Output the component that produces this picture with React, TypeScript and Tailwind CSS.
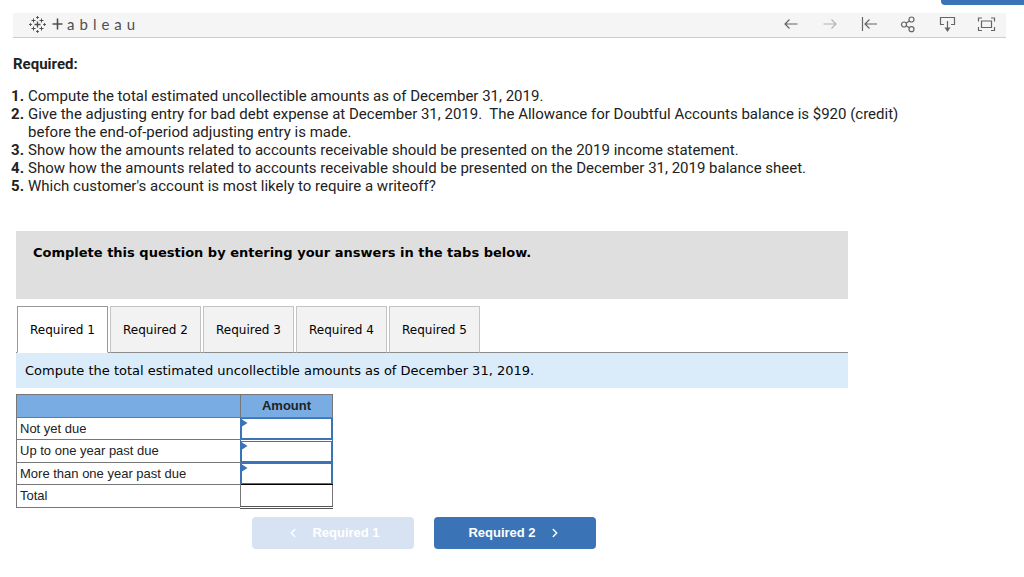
import { useState, type ReactNode } from "react";
import clsx from "clsx";
import { ChevronLeft, ChevronRight } from "lucide-react";

const tasks = [
  "Compute the total estimated uncollectible amounts as of December 31, 2019.",
  "Give the adjusting entry for bad debt expense at December 31, 2019.\u00a0 The Allowance for Doubtful Accounts balance is $920 (credit) before the end-of-period adjusting entry is made.",
  "Show how the amounts related to accounts receivable should be presented on the 2019 income statement.",
  "Show how the amounts related to accounts receivable should be presented on the December 31, 2019 balance sheet.",
  "Which customer's account is most likely to require a writeoff?",
];

const tabs = ["Required 1", "Required 2", "Required 3", "Required 4", "Required 5"];

const agingRows = ["Not yet due", "Up to one year past due", "More than one year past due"];

function TableauLogo() {
  return (
    <a href="#tableau" aria-label="tableau" className="flex items-center text-[#4f4f4f]">
      <svg width="17" height="17" viewBox="0 0 17 17" fill="none" stroke="currentColor">
        <path d="M8.5 5.5v6M5.5 8.5h6" strokeWidth="1.3" />
        <path
          d="M4.5 2.5v4M2.5 4.5h4M12.5 2.5v4M10.5 4.5h4M4.5 10.5v4M2.5 12.5h4M12.5 10.5v4M10.5 12.5h4"
          strokeWidth="1"
        />
        <path
          d="M8.5 0v3M7 1.5h3M8.5 14v3M7 15.5h3M1.5 7v3M0 8.5h3M15.5 7v3M14 8.5h3"
          strokeWidth="0.9"
        />
      </svg>
      <svg className="ml-1.5" width="11" height="12" viewBox="0 0 11 12" fill="none" stroke="currentColor">
        <path d="M5.5 0.5v11M0.5 6h10" strokeWidth="1.6" />
      </svg>
      <span className="ml-1 flex gap-[5px] font-[Lato,sans-serif] text-[15px] leading-5" aria-hidden="true">
        {["a", "b", "l", "e", "a", "u"].map((letter, i) => (
          <span key={i}>{letter}</span>
        ))}
      </span>
    </a>
  );
}

function ToolButton({ label, faded, children }: { label: string; faded?: boolean; children: ReactNode }) {
  return (
    <button type="button" aria-label={label} disabled={faded} className={faded ? "text-[#b4b4b4]" : "text-[#666666]"}>
      <svg width="20" height="18" viewBox="0 0 20 18" fill="none" stroke="currentColor" strokeWidth="1.2">
        {children}
      </svg>
    </button>
  );
}

function Toolbar() {
  return (
    <div className="mt-2 mr-[18px] ml-[13px] flex h-[25px] items-center justify-between border-b border-[#cccccc] bg-[#f5f5f5] pr-[10px] pb-[2px] pl-4">
      <TableauLogo />
      <div className="flex items-center gap-[19px]">
        <ToolButton label="Undo">
          <path d="M16.5 9H4M8.5 4.5L4 9l4.5 4.5" />
        </ToolButton>
        <ToolButton label="Redo" faded>
          <path d="M3.5 9H16M11.5 4.5L16 9l-4.5 4.5" />
        </ToolButton>
        <ToolButton label="Revert">
          <path d="M3.5 2v14M18 9H6M10.5 4.5L6 9l4.5 4.5" />
        </ToolButton>
        <ToolButton label="Share">
          <circle cx="6" cy="9.5" r="2.5" />
          <circle cx="13.5" cy="4.5" r="2.5" />
          <circle cx="13.5" cy="14.2" r="2.5" />
          <path d="M8 8.2l3.4-2.2M8 10.8l3.4 2" />
        </ToolButton>
        <ToolButton label="Download">
          <path d="M7 9.5H3.5v-7h14v7H14M10.5 6v9" />
          <path d="M7.5 12.5h6L10.5 17z" fill="currentColor" stroke="none" />
        </ToolButton>
        <ToolButton label="Full screen">
          <path d="M5.5 6h10v6.5h-10zM2.5 6.5V3H6M15 3h3.5v3.5M18.5 12v3.5H15M6 15.5H2.5V12" />
        </ToolButton>
      </div>
    </div>
  );
}

function AmountTable() {
  return (
    <table className="mt-[6px] ml-4 w-[317px] table-fixed border-collapse font-[Liberation_Sans,Arial,sans-serif] text-[13px] leading-4 text-[#222222]">
      <colgroup>
        <col className="w-[224px]" />
        <col />
      </colgroup>
      <thead>
        <tr className="h-[23px] bg-[#7aace4]">
          <td className="border border-[#777777] p-0" />
          <th scope="col" className="border border-[#777777] p-0 font-bold">
            Amount
          </th>
        </tr>
      </thead>
      <tbody>
        {agingRows.map((row, i) => (
          <tr key={row} className="h-[22px] even:h-[23px]">
            <th scope="row" className="border border-[#777777] border-r-[#3b74b6] px-[3px] py-0 text-left font-normal">
              <label htmlFor={`amount-${i}`}>{row}</label>
            </th>
            <td
              className={clsx(
                "border border-[#3b74b6] p-0",
                i === agingRows.length - 1 && "border-b-black"
              )}
            >
              <div className="relative">
                <input
                  id={`amount-${i}`}
                  type="text"
                  className="block h-[21px] w-full border border-[#3b74b6] px-1 text-right outline-none"
                />
                <svg className="absolute top-px left-px text-[#3b74b6]" width="6" height="8" viewBox="0 0 6 8">
                  <path d="M0 0.5l5.5 3.5L0 7.5z" fill="currentColor" />
                </svg>
              </div>
            </td>
          </tr>
        ))}
        <tr className="h-[23px]">
          <th scope="row" className="border border-[#777777] px-[3px] py-0 text-left font-normal">
            Total
          </th>
          <td className="border border-t-black border-r-[#777777] border-b-[3px] border-b-[#555555] border-l-[#777777] p-0 [border-bottom-style:double]" />
        </tr>
      </tbody>
    </table>
  );
}

export default function App() {
  const [active, setActive] = useState(0);

  return (
    <div className="bg-white pb-7 text-[#222222]">
      <div className="flex justify-end">
        <button type="button" aria-label="Menu" className="h-[5px] w-[83px] rounded-bl bg-[#3b74b6]" />
      </div>
      <Toolbar />

      <div className="pr-4 pl-[13px] font-[Roboto,sans-serif] text-[15px] leading-[18px]">
        <h1 className="mt-[17px] font-bold">Required:</h1>
        <ol className="mt-[14px] max-w-[930px]">
          {tasks.map((task, i) => (
            <li key={task} className="flex">
              <b className="-ml-1 w-[15px] shrink-0 text-right">{i + 1}.</b>
              <span className="ml-1">{task}</span>
            </li>
          ))}
        </ol>
      </div>

      <div className="mt-9 max-w-[848px] font-[DejaVu_Sans,Verdana,sans-serif] text-[13px] text-black">
        <div className="ml-4 h-[68px] bg-[#dfdfdf] px-[17px] pt-[13px] leading-[18px] font-bold">
          Complete this question by entering your answers in the tabs below.
        </div>

        <div role="tablist" className="mt-[7px] ml-4 flex gap-[2px] border-b border-[#8c8c8c] pl-px text-[12px]">
          {tabs.map((tab, i) => (
            <button
              key={tab}
              type="button"
              role="tab"
              aria-selected={i === active}
              onClick={() => setActive(i)}
              className={clsx(
                "-mb-px h-[47px] w-[91px] border",
                i === active
                  ? "border-[#999999] border-b-white bg-white"
                  : "border-[#c4c4c4] border-b-[#8c8c8c] bg-[#f2f2f2]"
              )}
            >
              {tab}
            </button>
          ))}
        </div>

        <p className="ml-4 bg-[#daebfa] px-[9px] pt-[9px] pb-2 leading-[18px]">
          Compute the total estimated uncollectible amounts as of December 31, 2019.
        </p>

        <AmountTable />

        <div className="mt-2 flex justify-center gap-5 font-[Liberation_Sans,Arial,sans-serif] text-[13px] font-bold text-white">
          <button type="button" disabled className="flex h-8 w-[162px] items-center justify-center gap-3 rounded-sm bg-[#d7e3f2]">
            <ChevronLeft size={14} strokeWidth={2.5} />
            Required 1
          </button>
          <button type="button" className="flex h-8 w-[162px] items-center justify-center gap-3 rounded-sm bg-[#3b74b6]">
            Required 2
            <ChevronRight size={14} strokeWidth={2.5} />
          </button>
        </div>
      </div>
    </div>
  );
}
